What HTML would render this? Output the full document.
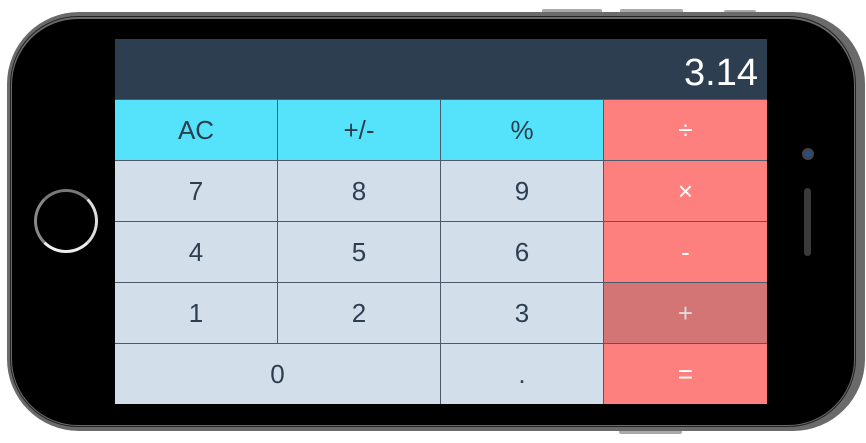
<!DOCTYPE html>
<html><head><style>
*{margin:0;padding:0;box-sizing:border-box}
body{width:866px;height:443px;background:#fff;position:relative;overflow:hidden;font-family:"Liberation Sans",sans-serif}
.btnh{position:absolute;background:#a9a9a9;border-radius:2px}
.phone{position:absolute;left:7px;top:12px;width:858px;height:419px;border-radius:72px;background:#6a6a6a}
.inner{position:absolute;left:12px;top:19px;width:842px;height:406px;border-radius:66px;background:#000}
.hl{position:absolute;left:10px;top:16px;width:846px;height:411px;border-radius:68px;border:1px solid #222}
.screen{position:absolute;left:115px;top:39px;width:652px;height:365px;background:#4b5b6b}
.disp{position:absolute;left:0;top:0;width:652px;height:60px;background:#2c3e50;color:#fff;font-size:38px;text-align:right;padding-right:9px;line-height:68px}
.k{position:absolute;display:flex;align-items:center;justify-content:center;font-size:26px;color:#2c3e50}
.c{background:#55e3fb}.g{background:#d2dfea}.r{background:#fe807e;color:#fff}.d{background:#d47575;color:#ddd}
</style></head><body>
<div class="btnh" style="left:542px;top:9px;width:60px;height:6px"></div>
<div class="btnh" style="left:620px;top:9px;width:63px;height:6px"></div>
<div class="btnh" style="left:724px;top:10px;width:32px;height:5px"></div>
<div class="btnh" style="left:619px;top:428px;width:63px;height:6px"></div>
<div class="phone"></div>
<div class="hl"></div>
<div class="inner"></div>
<div style="position:absolute;left:34px;top:189px;width:64px;height:64px;border-radius:50%;border:3px solid #bbb;border-top-color:#777;border-left-color:#888;border-right-color:#ddd;border-bottom-color:#eee"></div>
<div style="position:absolute;left:802px;top:148px;width:12px;height:12px;border-radius:50%;background:#444"><div style="margin:3px;width:6px;height:6px;border-radius:50%;background:#1f4f9a"></div></div>
<div style="position:absolute;left:804px;top:188px;width:7px;height:68px;border-radius:4px;background:#3a3a3a"></div>
<div class="screen">
<div class="disp">3.14</div>
<div class="k c" style="left:0;top:61px;width:162px;height:60px">AC</div>
<div class="k c" style="left:163px;top:61px;width:162px;height:60px">+/-</div>
<div class="k c" style="left:326px;top:61px;width:162px;height:60px">%</div>
<div class="k r" style="left:489px;top:61px;width:163px;height:60px">÷</div>
<div class="k g" style="left:0;top:122px;width:162px;height:60px">7</div>
<div class="k g" style="left:163px;top:122px;width:162px;height:60px">8</div>
<div class="k g" style="left:326px;top:122px;width:162px;height:60px">9</div>
<div class="k r" style="left:489px;top:122px;width:163px;height:60px">×</div>
<div class="k g" style="left:0;top:183px;width:162px;height:60px">4</div>
<div class="k g" style="left:163px;top:183px;width:162px;height:60px">5</div>
<div class="k g" style="left:326px;top:183px;width:162px;height:60px">6</div>
<div class="k r" style="left:489px;top:183px;width:163px;height:60px">-</div>
<div class="k g" style="left:0;top:244px;width:162px;height:60px">1</div>
<div class="k g" style="left:163px;top:244px;width:162px;height:60px">2</div>
<div class="k g" style="left:326px;top:244px;width:162px;height:60px">3</div>
<div class="k d" style="left:489px;top:244px;width:163px;height:60px">+</div>
<div class="k g" style="left:0;top:305px;width:325px;height:60px">0</div>
<div class="k g" style="left:326px;top:305px;width:162px;height:60px">.</div>
<div class="k r" style="left:489px;top:305px;width:163px;height:60px">=</div>
</div>
</body></html>
